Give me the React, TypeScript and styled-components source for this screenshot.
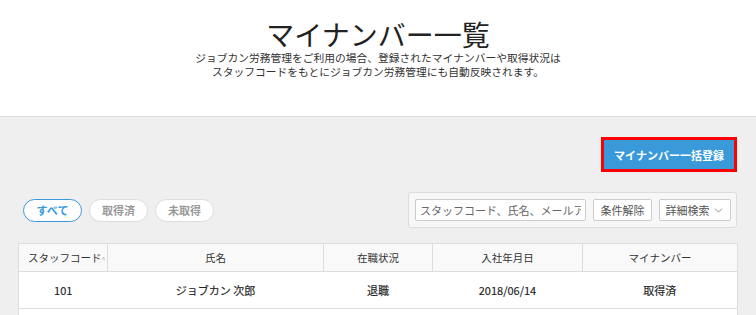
import React from 'react';
import styled, { createGlobalStyle } from 'styled-components';
import { ChevronDown } from 'lucide-react';

const GlobalStyle = createGlobalStyle`
  html, body {
    margin: 0;
    padding: 0;
    background: #efefef;
    font-family: 'Noto Sans CJK JP', 'Noto Sans', 'Liberation Sans', sans-serif;
    color: #333;
    overflow: hidden;
  }
  * { box-sizing: border-box; }
`;

type Row = {
  code: string;
  name: string;
  status: string;
  joined: string;
  myNumber: string;
};

const rows: Row[] = [
  { code: '101', name: 'ジョブカン 次郎', status: '退職', joined: '2018/06/14', myNumber: '取得済' },
  { code: '102', name: 'ジョブカン 三郎', status: '在職', joined: '2018/07/01', myNumber: '未取得' },
];

const columns = [
  { label: 'スタッフコード', width: 89, sort: true },
  { label: '氏名', width: 216 },
  { label: '在職状況', width: 109 },
  { label: '入社年月日', width: 150 },
  { label: 'マイナンバー', width: 155 },
];

function App() {
  return (
    <>
      <GlobalStyle />
      <Header>
        <Title>マイナンバー一覧</Title>
        <Lead>
          ジョブカン労務管理をご利用の場合、登録されたマイナンバーや取得状況は
          <br />
          スタッフコードをもとにジョブカン労務管理にも自動反映されます。
        </Lead>
      </Header>
      <Main>
        <ActionRow>
          <Highlight>
            <PrimaryButton>マイナンバー一括登録</PrimaryButton>
          </Highlight>
        </ActionRow>
        <Toolbar>
          <Pills>
            <Pill active>すべて</Pill>
            <Pill>取得済</Pill>
            <Pill>未取得</Pill>
          </Pills>
          <SearchBox>
            <SearchInput placeholder="スタッフコード、氏名、メールアドレス" />
            <PlainButton width={59}>条件解除</PlainButton>
            <PlainButton width={72}>
              詳細検索
              <ChevronDown size={13} strokeWidth={1.5} />
            </PlainButton>
          </SearchBox>
        </Toolbar>
        <Table>
          <colgroup>
            {columns.map((c) => (
              <col key={c.label} style={{ width: c.width }} />
            ))}
          </colgroup>
          <thead>
            <tr>
              {columns.map((c) => (
                <Th key={c.label} sortable={c.sort}>
                  {c.label}
                  {c.sort && <SortMark>^</SortMark>}
                </Th>
              ))}
            </tr>
          </thead>
          <tbody>
            {rows.map((r) => (
              <tr key={r.code}>
                <Td>{r.code}</Td>
                <Td>{r.name}</Td>
                <Td>{r.status}</Td>
                <Td>{r.joined}</Td>
                <Td>{r.myNumber}</Td>
              </tr>
            ))}
          </tbody>
        </Table>
      </Main>
    </>
  );
}

export default App;

const Header = styled.header`
  background: #fff;
  height: 117px;
  border-bottom: 1px solid #dedede;
  padding-top: 17px;
  text-align: center;
`;

const Title = styled.h1`
  margin: 0;
  font-size: 28px;
  line-height: 34px;
  font-weight: 400;
  color: #222;
`;

const Lead = styled.p`
  margin: 0;
  font-size: 10.75px;
  line-height: 14px;
  color: #333;
`;

const Main = styled.main`
  padding: 0 19px 0 18px;
`;

const ActionRow = styled.div`
  display: flex;
  justify-content: flex-end;
  padding-top: 20px;
`;

const Highlight = styled.div`
  border: 3px solid #f00;
`;

const PrimaryButton = styled.button`
  display: block;
  width: 130px;
  height: 29px;
  border: none;
  background: #3a9ad9;
  color: #fff;
  font-family: inherit;
  font-size: 11px;
  font-weight: 700;
  padding: 0;
`;

const Toolbar = styled.div`
  display: flex;
  justify-content: space-between;
  align-items: center;
  margin-top: 20px;
`;

const Pills = styled.div`
  display: flex;
  gap: 7px;
  padding-left: 5px;
`;

const Pill = styled.button<{ active?: boolean }>`
  width: 59px;
  height: 23px;
  border-radius: 12px;
  background: #fff;
  border: 1px solid ${(p) => (p.active ? '#3a9ad9' : '#dcdcdc')};
  color: ${(p) => (p.active ? '#3a9ad9' : '#999')};
  font-family: inherit;
  font-size: 11px;
  font-weight: 700;
  padding: 0;
`;

const SearchBox = styled.div`
  display: flex;
  gap: 7px;
  padding: 6px 5px 6px 6px;
  background: #f7f7f7;
  border: 1px solid #dcdcdc;
  border-radius: 3px;
`;

const SearchInput = styled.input`
  width: 171px;
  height: 22px;
  border: 1px solid #ccc;
  border-radius: 2px;
  background: #fff;
  padding: 0 4px;
  font-family: inherit;
  font-size: 11px;
  color: #555;
  &::placeholder {
    color: #666;
  }
`;

const PlainButton = styled.button<{ width: number }>`
  display: flex;
  align-items: center;
  justify-content: center;
  gap: 2px;
  width: ${(p) => p.width}px;
  height: 22px;
  padding: 0;
  border: 1px solid #ccc;
  border-radius: 2px;
  background: #fff;
  color: #555;
  font-family: inherit;
  font-size: 11px;
  svg {
    color: #777;
  }
`;

const Table = styled.table`
  margin-top: 15px;
  width: 719px;
  table-layout: fixed;
  border-collapse: collapse;
  background: #fff;
`;

const Th = styled.th<{ sortable?: boolean }>`
  height: 28px;
  padding: ${(p) => (p.sortable ? '0 0 0 9px' : '0')};
  background: #f9f9f9;
  border: 1px solid #dddddd;
  font-size: 10.5px;
  font-weight: 400;
  color: #333;
  text-align: ${(p) => (p.sortable ? 'left' : 'center')};
  white-space: nowrap;
  overflow: hidden;
`;

const SortMark = styled.span`
  font-size: 7px;
  color: #aaa;
  vertical-align: middle;
`;

const Td = styled.td`
  height: 37px;
  padding: 0;
  border-top: 1px solid #dddddd;
  border-bottom: 1px solid #dddddd;
  font-size: 11px;
  font-weight: 400;
  color: #222;
  -webkit-text-stroke: 0.15px #222;
  text-align: center;
  &:first-child {
    border-left: 1px solid #dddddd;
  }
  &:last-child {
    border-right: 1px solid #dddddd;
  }
`;
